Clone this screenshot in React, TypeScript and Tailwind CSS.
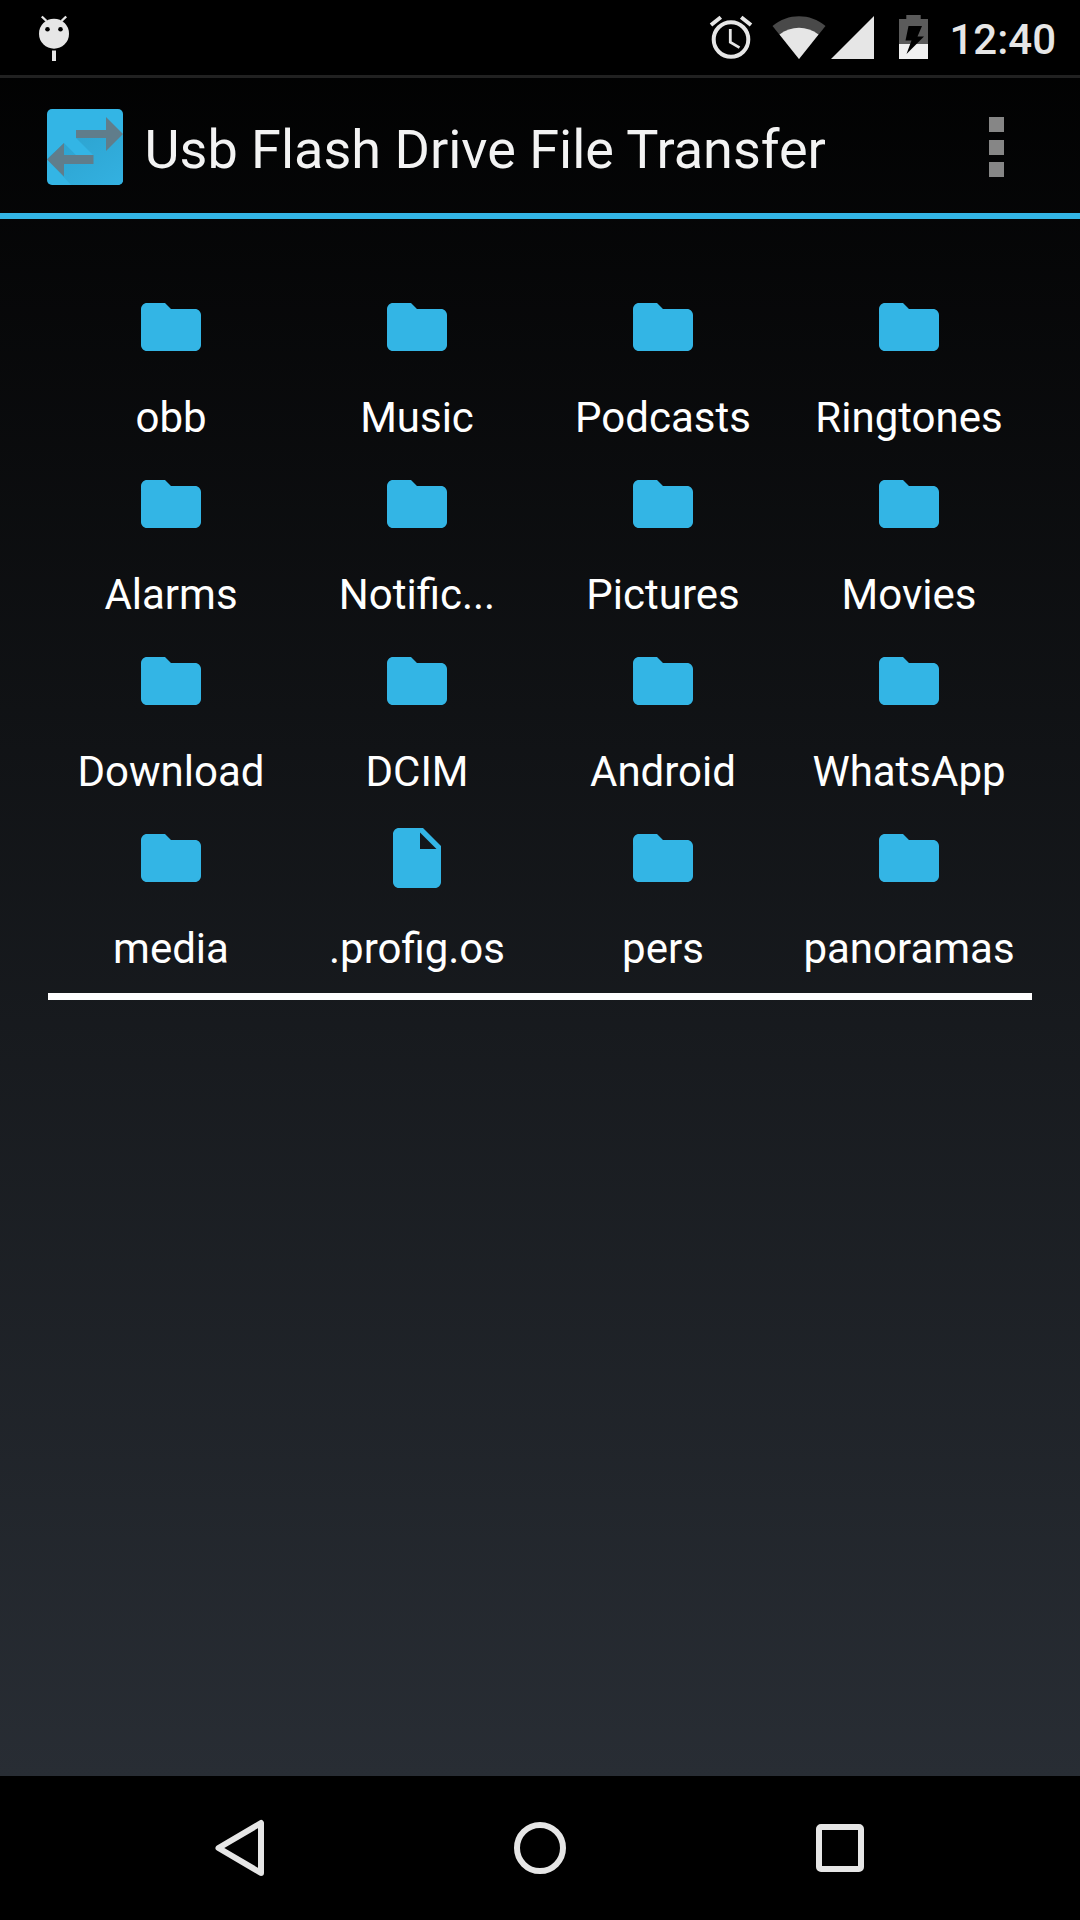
import { MdFolder } from "react-icons/md";

const files = [
  { name: "obb", type: "folder" },
  { name: "Music", type: "folder" },
  { name: "Podcasts", type: "folder" },
  { name: "Ringtones", type: "folder" },
  { name: "Alarms", type: "folder" },
  { name: "Notific...", type: "folder" },
  { name: "Pictures", type: "folder" },
  { name: "Movies", type: "folder" },
  { name: "Download", type: "folder" },
  { name: "DCIM", type: "folder" },
  { name: "Android", type: "folder" },
  { name: "WhatsApp", type: "folder" },
  { name: "media", type: "folder" },
  { name: ".profig.os", type: "file" },
  { name: "pers", type: "folder" },
  { name: "panoramas", type: "folder" },
];

const FileIcon = () => (
  <svg viewBox="0 0 24 24" className="size-[72px] fill-[#33b5e5]">
    <path
      fillRule="evenodd"
      d="M6 2h8l6 6v12c0 1.1-.9 2-2 2H6c-1.1 0-2-.9-2-2V4c0-1.1.9-2 2-2zM13 3.500V9h5.500z"
    />
  </svg>
);

const AppLogo = () => (
  <svg viewBox="0 0 76 76" className="size-[76px]">
    <defs>
      <clipPath id="tile">
        <rect width="76" height="76" rx="5" />
      </clipPath>
      <linearGradient id="shade" x1="0" y1="0" x2="1" y2="1">
        <stop offset="0" stopColor="#2ca1cd" />
        <stop offset="1" stopColor="#33b1e1" />
      </linearGradient>
    </defs>
    <g clipPath="url(#tile)">
      <rect width="76" height="76" fill="#33b5e5" />
      <path d="M29 29 76 25V76H24L0 50 17 34 29 46H46z" fill="url(#shade)" />
      <path
        d="M29 21H59V8L76 25 59 42V29H29zM46.500 46H17V34L0 50.500 17 67.500V55H46.500z"
        fill="#607d8b"
      />
    </g>
  </svg>
);

const StatusBar = () => (
  <div className="flex h-[78px] items-start justify-between border-b-[3px] border-[#212121] bg-black">
    <svg viewBox="0 0 32 48" className="ml-[38px] mt-[15px] h-12 w-8">
      <circle cx="16" cy="18.700" r="15" fill="#e6e6e6" />
      <path d="M8.500 6 3.800 1.500M23.500 6 28.200 1.500" stroke="#e6e6e6" strokeWidth="2.400" />
      <path d="M14 35.500h4V46h-4z" fill="#e6e6e6" />
      <circle cx="9.500" cy="14.300" r="2.300" />
      <circle cx="22.500" cy="14.300" r="2.300" />
    </svg>
    <div className="flex">
      <svg viewBox="0 0 44 46" className="mt-[15px] h-[46px] w-11">
        <g fill="none" stroke="#e6e6e6">
          <circle cx="22" cy="24.500" r="17.300" strokeWidth="4" />
          <path d="M21.300 14v13.200l9.200 5.400" strokeWidth="2.800" />
          <path d="M2 10 11.800 2.200M42 10 32.200 2.200" strokeWidth="4" />
        </g>
      </svg>
      <svg viewBox="0 0 54 44" className="ml-[19px] mt-[16px] h-11 w-[54px]">
        <path d="M27 43 .5 10C16-3 38-3 53.500 10z" fill="#494949" />
        <path d="M27 43 7.500 18.500C19 9.500 35 9.500 46.500 18.500z" fill="#e6e6e6" />
      </svg>
      <svg viewBox="0 0 43 43" className="ml-[5px] mt-[16px] size-[43px]">
        <path d="M0 43 43 0v43z" fill="#e6e6e6" />
      </svg>
      <svg viewBox="0 0 29 44" className="ml-[25px] mt-[15px] h-11 w-[29px]">
        <path d="M7.300 0h14.400v4H29v25H0V4h7.300z" fill="#5b5b5b" />
        <path d="M0 29h29v15H0z" fill="#f0f0f0" />
        <path d="M9.500 11H23l-4.500 10.500H25L7.500 39l5-13.500H6.500z" />
      </svg>
      <span className="ml-[21px] mr-6 mt-[15px] text-[42px] leading-[49px] font-medium text-[#e6e6e6]">
        12:40
      </span>
    </div>
  </div>
);

const Header = () => (
  <div className="flex h-[141px] items-start border-b-[6px] border-[#33b5e5] pl-[47px] pr-[76px]">
    <div className="mt-[31px]">
      <AppLogo />
    </div>
    <h1 className="ml-[21.500px] mt-[40px] text-[54px] leading-[63px] whitespace-nowrap text-[#f3f3f3]">
      Usb Flash Drive File Transfer
    </h1>
    <div className="ml-auto mt-[39px] flex flex-col gap-[7.500px]">
      <span className="size-[15px] bg-[#868686]"></span>
      <span className="size-[15px] bg-[#868686]"></span>
      <span className="size-[15px] bg-[#868686]"></span>
    </div>
  </div>
);

const NavBar = () => (
  <div className="flex h-36 items-center justify-center bg-black">
    <svg viewBox="0 0 900 60" className="h-[60px] w-[900px] fill-none stroke-[#e6e6e6] stroke-[6]">
      <path d="M171 5V55L128.500 30z" strokeLinejoin="round" />
      <circle cx="450" cy="30" r="23" />
      <rect x="729" y="9" width="42" height="42" rx="2" />
    </svg>
  </div>
);

export default function App() {
  return (
    <div className="flex h-[1920px] w-[1080px] flex-col overflow-hidden bg-black font-['Roboto',sans-serif]">
      <div className="flex flex-1 flex-col bg-linear-to-b/srgb from-black to-[#282d34]">
        <StatusBar />
        <Header />
        <div className="mx-12 mt-[72px] grid h-[709px] auto-rows-[177px] grid-cols-4 border-b-[7px] border-white">
          {files.map((file) => (
            <div key={file.name} className="flex flex-col items-center">
              {file.type === "folder" ? (
                <MdFolder className="size-[72px] text-[#33b5e5]" />
              ) : (
                <FileIcon />
              )}
              <p className="mt-[30px] text-[42px] leading-[49px] whitespace-nowrap text-white">
                {file.name}
              </p>
            </div>
          ))}
        </div>
      </div>
      <NavBar />
    </div>
  );
}
